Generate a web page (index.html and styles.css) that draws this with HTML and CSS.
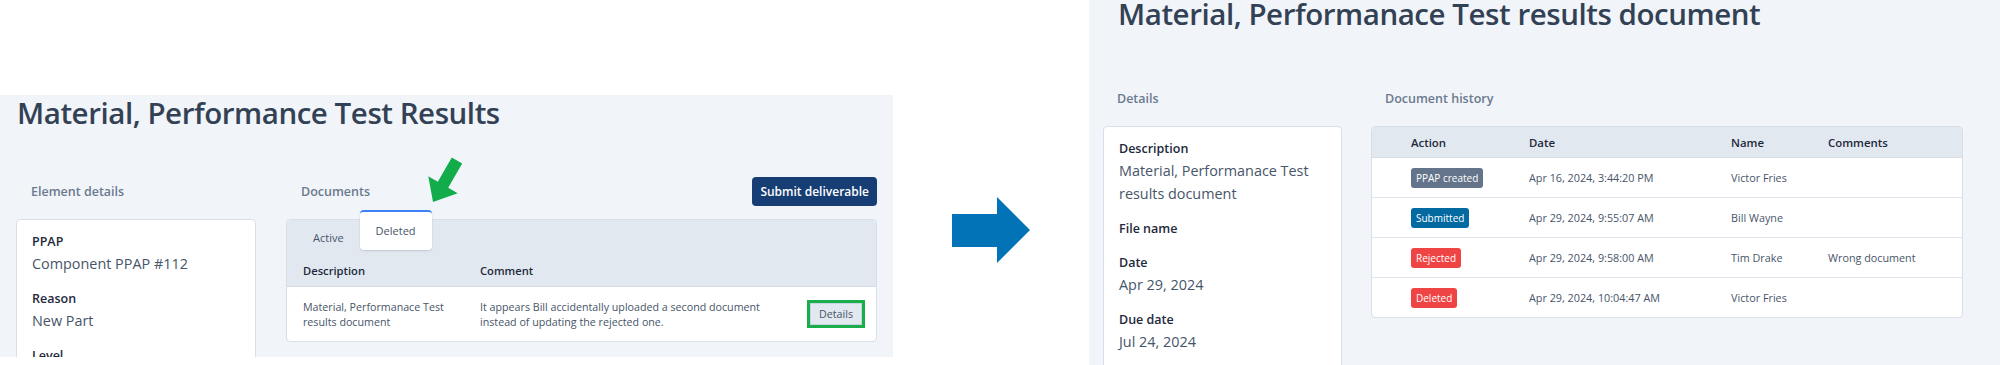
FILE: index.html
```html
<!DOCTYPE html>
<html lang="en">
<head>
    <meta charset="UTF-8">
    <meta name="viewport" content="width=device-width, initial-scale=1.0">
    <title>Deleted documents - before and after</title>
    <link rel="stylesheet" href="styles.css">
</head>
<body>
    <div class="compare">
        <!-- Before: deliverable page with the Deleted tab -->
        <section class="screen screen-before">
            <h1 class="page-title">Material, Performance Test Results</h1>
            <div class="columns">
                <div class="column">
                    <div class="column-head">
                        <h2 class="section-label">Element details</h2>
                    </div>
                    <div class="card fields">
                        <div class="field">
                            <div class="field-label">PPAP</div>
                            <div class="field-value">Component PPAP #112</div>
                        </div>
                        <div class="field">
                            <div class="field-label">Reason</div>
                            <div class="field-value">New Part</div>
                        </div>
                        <div class="field">
                            <div class="field-label">Level</div>
                            <div class="field-value">Level 3</div>
                        </div>
                    </div>
                </div>
                <div class="column">
                    <div class="column-head">
                        <h2 class="section-label">Documents</h2>
                        <button class="btn-primary">Submit deliverable</button>
                    </div>
                    <div class="card table-card">
                        <div class="tabs">
                            <span class="tab">Active</span>
                            <span class="tab tab-current">Deleted</span>
                        </div>
                        <table class="doc-table">
                            <colgroup>
                                <col class="col-desc">
                                <col class="col-comment">
                                <col class="col-btn">
                            </colgroup>
                            <thead>
                                <tr><th>Description</th><th>Comment</th><th></th></tr>
                            </thead>
                            <tbody>
                                <tr>
                                    <td>Material, Performanace Test results document</td>
                                    <td>It appears Bill accidentally uploaded a second document instead of updating the rejected one.</td>
                                    <td class="cell-btn"><button class="btn-details">Details</button></td>
                                </tr>
                            </tbody>
                        </table>
                    </div>
                </div>
            </div>
            <svg class="callout" width="42" height="50" viewBox="0 0 42 50">
                <polygon points="27.8,2.5 38.2,8.5 24.2,32.7 33.7,38.2 9,47 4.3,21.2 13.8,26.7" fill="#12ad4a"/>
            </svg>
        </section>

        <div class="step-arrow">
            <svg width="78" height="66" viewBox="0 0 78 66">
                <polygon points="0,17 45,17 45,0 78,33 45,66 45,50 0,50" fill="#0373b8"/>
            </svg>
        </div>

        <!-- After: document details page -->
        <section class="screen screen-after">
            <h1 class="page-title">Material, Performanace Test results document</h1>
            <div class="columns">
                <div class="column">
                    <div class="column-head">
                        <h2 class="section-label">Details</h2>
                    </div>
                    <div class="card fields">
                        <div class="field">
                            <div class="field-label">Description</div>
                            <div class="field-value">Material, Performanace Test results document</div>
                        </div>
                        <div class="field">
                            <div class="field-label">File name</div>
                            <div class="field-value"></div>
                        </div>
                        <div class="field">
                            <div class="field-label">Date</div>
                            <div class="field-value">Apr 29, 2024</div>
                        </div>
                        <div class="field">
                            <div class="field-label">Due date</div>
                            <div class="field-value">Jul 24, 2024</div>
                        </div>
                    </div>
                </div>
                <div class="column">
                    <div class="column-head">
                        <h2 class="section-label">Document history</h2>
                    </div>
                    <div class="card history-card">
                        <table class="history">
                            <colgroup>
                                <col class="col-action">
                                <col class="col-date">
                                <col class="col-name">
                                <col>
                            </colgroup>
                            <thead>
                                <tr><th>Action</th><th>Date</th><th>Name</th><th>Comments</th></tr>
                            </thead>
                            <tbody>
                                <tr>
                                    <td><span class="badge badge-gray">PPAP created</span></td>
                                    <td>Apr 16, 2024, 3:44:20 PM</td>
                                    <td>Victor Fries</td>
                                    <td></td>
                                </tr>
                                <tr>
                                    <td><span class="badge badge-blue">Submitted</span></td>
                                    <td>Apr 29, 2024, 9:55:07 AM</td>
                                    <td>Bill Wayne</td>
                                    <td></td>
                                </tr>
                                <tr>
                                    <td><span class="badge badge-red">Rejected</span></td>
                                    <td>Apr 29, 2024, 9:58:00 AM</td>
                                    <td>Tim Drake</td>
                                    <td>Wrong document</td>
                                </tr>
                                <tr>
                                    <td><span class="badge badge-red">Deleted</span></td>
                                    <td>Apr 29, 2024, 10:04:47 AM</td>
                                    <td>Victor Fries</td>
                                    <td></td>
                                </tr>
                            </tbody>
                        </table>
                    </div>
                </div>
            </div>
        </section>
    </div>
</body>
</html>
```

FILE: styles.css
```css
* {
    box-sizing: border-box;
}
body {
    margin: 0;
    background: #fff;
    font-family: "Open Sans", "Noto Sans", sans-serif;
    color: #475569;
}
.compare {
    display: flex;
    align-items: flex-start;
    height: 365px;
    overflow: hidden;
}
.screen {
    position: relative;
    background: #f1f5f9;
}
.screen-before {
    display: flex;
    flex-direction: column;
    flex: 0 0 893px;
    height: 262px;
    margin-top: 95px;
    padding: 0 16px;
}
.screen-before .columns {
    flex: 1;
    min-height: 0;
    overflow: hidden;
}
.screen-after {
    flex: 0 0 911px;
    height: 365px;
    padding: 0 37px 0 14px;
    overflow: hidden;
}
.page-title {
    margin: 0;
    padding-left: 1px;
    font-size: 29.5px;
    line-height: 36px;
    font-weight: 600;
    letter-spacing: -0.45px;
    color: #334155;
    white-space: nowrap;
}
.screen-after .page-title {
    margin-top: -4px;
    padding-left: 15px;
}
.columns {
    display: grid;
    grid-template-columns: 240px 591px;
    column-gap: 30px;
}
.screen-after .columns {
    grid-template-columns: 239px 592px;
    column-gap: 29px;
}
.column-head {
    display: flex;
    align-items: center;
    justify-content: space-between;
    height: 29px;
    margin: 46px 0 13px;
    padding-left: 15px;
}
.screen-after .column-head {
    margin-top: 52px;
    padding-left: 14px;
}
.section-label {
    margin: 0;
    font-size: 12.5px;
    font-weight: 600;
    color: #6b7a8f;
}
.btn-primary {
    height: 29px;
    padding: 0 8px;
    border: 0;
    border-radius: 4px;
    background: #173e74;
    color: #fff;
    font-family: inherit;
    font-size: 12px;
    font-weight: 600;
}
.card {
    background: #fff;
    border: 1px solid #d8dfe8;
    border-radius: 4px;
}
.fields {
    min-height: 300px;
    padding: 12px 15px;
}
.field + .field {
    margin-top: 14px;
}
.field-label {
    font-size: 12.5px;
    font-weight: 600;
    line-height: 20px;
    color: #1e293b;
}
.field-value {
    font-size: 14.4px;
    line-height: 23px;
    color: #475569;
}

/* documents table with tabs */
.tabs {
    display: flex;
    align-items: flex-start;
    height: 35px;
    padding-left: 10px;
    background: #e2e8f0;
    border-radius: 3px 3px 0 0;
}
.tab {
    padding: 0 16px;
    font-size: 11px;
    line-height: 35px;
    color: #475569;
}
.tab-current {
    margin-top: -10px;
    height: 40px;
    line-height: 38px;
    background: #fff;
    border-top: 2px solid #3b82f6;
    border-radius: 4px;
    box-shadow: 0 1px 2px rgba(15, 23, 42, 0.15);
}
.doc-table,
.history {
    width: 100%;
    border-collapse: separate;
    border-spacing: 0;
    table-layout: fixed;
}
.col-desc {
    width: 177px;
}
.col-btn {
    width: 77px;
}
.doc-table th {
    height: 32px;
    padding: 0 16px;
    background: #e2e8f0;
    border-bottom: 1px solid #d5dce5;
    text-align: left;
    font-size: 11.2px;
    font-weight: 600;
    color: #1e293b;
}
.doc-table td {
    padding: 13px 8px 11px 16px;
    font-size: 10.7px;
    line-height: 15px;
    vertical-align: top;
    color: #475569;
}
.doc-table .cell-btn {
    padding: 0 14px 0 0;
    vertical-align: middle;
    text-align: right;
}
.btn-details {
    height: 22px;
    padding: 0 8px;
    border: 1px solid #cbd5e1;
    border-radius: 0;
    background: #e2e8f0;
    color: #475569;
    font-family: inherit;
    font-size: 10.7px;
    outline: 3px solid #17ae4b;
}
.callout {
    position: absolute;
    left: 424px;
    top: 60px;
}

/* arrow between the two screens */
.step-arrow {
    flex: 0 0 196px;
    padding: 197px 0 0 59px;
}
.step-arrow svg {
    display: block;
}

/* history table */
.history-card {
    overflow: hidden;
}
.col-action {
    width: 141px;
}
.col-date {
    width: 202px;
}
.col-name {
    width: 97px;
}
.history th {
    height: 31px;
    padding: 0 16px;
    background: #e2e8f0;
    border-bottom: 1px solid #d5dce5;
    text-align: left;
    font-size: 11.4px;
    font-weight: 600;
    color: #1e293b;
}
.history td {
    height: 40px;
    padding: 0 16px;
    border-bottom: 1px solid #dfe5ec;
    font-size: 10.8px;
    color: #475569;
    white-space: nowrap;
}
.history tr:last-child td {
    height: 39px;
    border-bottom: 0;
}
.history th:first-child,
.history td:first-child {
    padding-left: 39px;
}
.badge {
    display: inline-block;
    height: 20px;
    padding: 0 5px;
    border-radius: 3px;
    font-size: 10px;
    line-height: 20px;
    color: #fff;
    vertical-align: middle;
}
.badge-gray {
    background: #64748b;
}
.badge-blue {
    background: #0369a1;
}
.badge-red {
    background: #ef4444;
}
```
